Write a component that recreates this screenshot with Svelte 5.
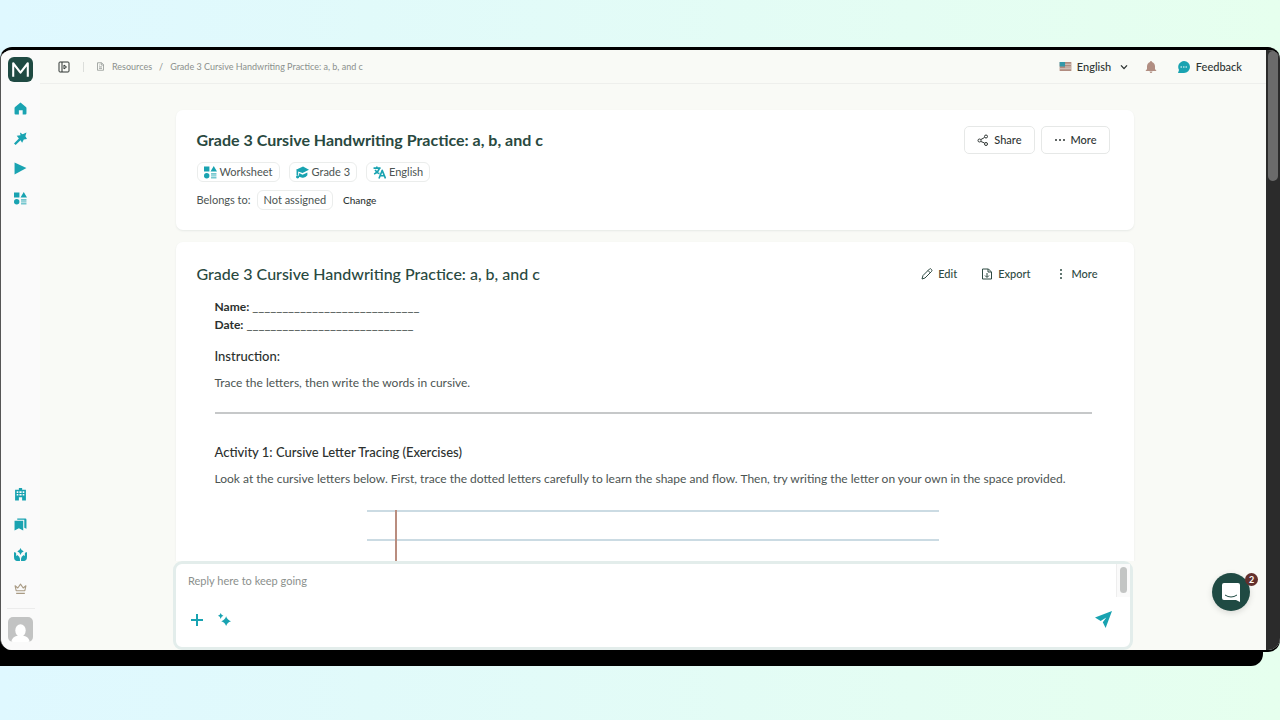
<script>
  const title = 'Grade 3 Cursive Handwriting Practice: a, b, and c';
  const blank = '_'.repeat(28);

  const topLinks = [
    { label: 'Home', icon: 'home' },
    { label: 'Tools', icon: 'wand' },
    { label: 'Start', icon: 'play' },
    { label: 'Resources', icon: 'shapes' }
  ];
  const bottomLinks = [
    { label: 'School', icon: 'school' },
    { label: 'Library', icon: 'bookmarks' },
    { label: 'Wellbeing', icon: 'hands' }
  ];

  let language = $state('English');
  let reply = $state('');
</script>

{#snippet icon(name)}
  <svg class="icon {name}" viewBox="0 0 24 24" aria-hidden="true">
    {#if name === 'home'}
      <path d="M12 1 22 9q1 1 1 2v10q0 2-2 2h-5v-8H9v8H3q-2 0-2-2V11q0-1 1-2Z" />
    {:else if name === 'wand'}
      <path d="m11 1 5 3 7-3-2 7 3 5-6 1-3 6-3-5L3 24l-3-3 9-9-4-5 7-1Z" />
    {:else if name === 'play'}
      <path d="M1 1 23 11 1 23Z" />
    {:else if name === 'shapes'}
      <path d="M0 1h10v9H0ZM18 0l6 10H12Z" /><circle cx="5" cy="18" r="5" />
      <path class="soft" d="M13 13h10v3H13Zm0 4h10v2H13Zm0 3h10v3H13Z" />
    {:else if name === 'school'}
      <path fill-rule="evenodd" d="M2 3h7V0h6v3h7v20h-7v-6H9v6H2ZM5 6v3h3V6Zm5 0v3h4V6Zm6 0v3h3V6ZM5 11v3h3v-3Zm5 0v3h4v-3Zm6 0v3h3v-3Z" />
    {:else if name === 'bookmarks'}
      <path d="M1 5h16v18l-8-4-8 4Z" /><path d="M6 1h15q2 0 2 2v17l-4-2V3H6Z" />
    {:else if name === 'hands'}
      <path d="M12 0q1 4 6 6-5 2-6 7-1-5-6-7 5-2 6-6Z" />
      <path d="M0 8q3-1 4 2v5l2-2q5 3 5 7v4H5q-5-1-5-8ZM24 8q-3-1-4 2v5l-2-2q-5 3-5 7v4h6q5-1 5-8Z" />
    {:else if name === 'crown'}
      <path class="line" d="M4 16 2 7l5 4 5-7 5 7 5-4-2 9ZM4 21h16" />
    {:else if name === 'panel'}
      <rect class="line" x="2" y="2" width="20" height="20" rx="2" /><path class="line" d="M8 2v20M12 8l5 4-5 4Z" />
    {:else if name === 'file'}
      <path class="line" d="M4 2h11l5 5v15H4ZM14 2v6h6M8 8h2M8 13h8M8 17h8" />
    {:else if name === 'chevron'}
      <path class="line" d="m3 7 9 10 9-10" />
    {:else if name === 'bell'}
      <path d="M10 2q0-2 2-2t2 2q6 2 6 9v5l3 4H1l3-4v-5q0-7 6-9ZM9 21h6q-1 3-3 3t-3-3Z" />
    {:else if name === 'chat'}
      <path d="M12 0a12 12 0 1 1 0 24H0l2-6A12 12 0 0 1 12 0Z" /><path class="white-dots" d="M5 12h3m2 0h3m2 0h3" />
    {:else if name === 'share'}
      <circle class="line" cx="5" cy="13" r="3" /><circle class="line" cx="18" cy="5" r="3" /><circle class="line" cx="18" cy="20" r="3" />
      <path class="line" d="m8 11 7-4m-7 8 7 3" />
    {:else if name === 'dots'}
      <circle cx="4" cy="12" r="2" /><circle cx="12" cy="12" r="2" /><circle cx="20" cy="12" r="2" />
    {:else if name === 'kebab'}
      <circle cx="12" cy="4" r="2" /><circle cx="12" cy="12" r="2" /><circle cx="12" cy="20" r="2" />
    {:else if name === 'cap'}
      <path d="M0 7 13 1l11 6-12 6-8-3v7H1v-9ZM6 13l6 3 9-4v5q-4 6-11 4-3-1-5-1Z" /><circle cx="3" cy="20" r="3" />
    {:else if name === 'translate'}
      <path class="line" d="M1 4h13M7 1v3M12 4Q9 12 2 15M4 7q3 6 8 7M11 23l6-15 6 15M13 18h8" />
    {:else if name === 'pencil'}
      <path class="line" d="m2 22 2-7L17 2q2-2 4 1t0 4L8 20ZM14 5l5 5" />
    {:else if name === 'export'}
      <path class="line" d="M3 2h12l6 6v14H3ZM14 2v6h6M12 10v8m-4-3 4 4 4-4" />
    {:else if name === 'plus'}
      <path class="line" d="M12 0v24M0 12h24" />
    {:else if name === 'sparkles'}
      <path d="M15 6q2 7 9 9-7 2-9 9-2-7-9-9 7-2 9-9ZM5 0q1 4 5 5-4 1-5 6-1-5-5-6 4-1 5-5Z" />
    {:else if name === 'send'}
      <path d="M24 0 15 24l-4-8 5-7-8 5L0 9Z" />
    {/if}
  </svg>
{/snippet}

<div class="page">
  <div class="window">
    <nav class="sidebar" aria-label="Main">
      <a class="logo" href="#home" aria-label="Start page">
        <svg viewBox="0 0 24 24" aria-hidden="true">
          <path d="M5 19V6l7 9 7-9v13" />
        </svg>
      </a>
      {#each topLinks as link}
        <a class="nav-link" href="#{link.icon}" aria-label={link.label}>{@render icon(link.icon)}</a>
      {/each}
      <div class="spacer"></div>
      {#each bottomLinks as link}
        <a class="nav-link" href="#{link.icon}" aria-label={link.label}>{@render icon(link.icon)}</a>
      {/each}
      <a class="nav-link upgrade" href="#upgrade" aria-label="Upgrade">{@render icon('crown')}</a>
      <button class="avatar" aria-label="Account">
        <svg viewBox="0 0 24 24" aria-hidden="true">
          <ellipse cx="12" cy="13" rx="5" ry="6" />
          <path d="M3 24q1-5 6-6h6q5 1 6 6Z" />
        </svg>
      </button>
    </nav>

    <div class="main">
      <header class="topbar">
        <button class="plain" aria-label="Open sidebar">{@render icon('panel')}</button>
        <span class="divider"></span>
        <nav class="crumbs" aria-label="Breadcrumb">
          {@render icon('file')}
          <a href="#resources">Resources</a>
          <span>/</span>
          <a href="#worksheet">{title}</a>
        </nav>
        <div class="spacer"></div>
        <label class="language">
          <svg class="flag" viewBox="0 0 13 10" aria-hidden="true">
            <path fill="#b18c80" d="M0 0h13v10H0Z" />
            <path fill="#d9cbc4" d="M6 2h7v1H6Zm0 3h7v1H6ZM0 7h13v1H0Z" />
            <path fill="#3498a9" d="M0 0h6v5H0Z" />
          </svg>
          <select bind:value={language} aria-label="Language">
            <option>English</option>
          </select>
          {@render icon('chevron')}
        </label>
        <button class="plain" aria-label="Notifications">{@render icon('bell')}</button>
        <button class="plain feedback">{@render icon('chat')}Feedback</button>
      </header>

      <main class="content">
        <section class="card summary">
          <div class="row">
            <h1>{title}</h1>
            <div class="actions">
              <button class="outlined">{@render icon('share')}Share</button>
              <button class="outlined">{@render icon('dots')}More</button>
            </div>
          </div>
          <div class="tags">
            <span class="tag">{@render icon('shapes')}Worksheet</span>
            <span class="tag">{@render icon('cap')}Grade 3</span>
            <span class="tag">{@render icon('translate')}English</span>
          </div>
          <div class="belongs">
            <span>Belongs to:</span>
            <span class="tag">Not assigned</span>
            <button class="plain">Change</button>
          </div>
        </section>

        <section class="card document">
          <div class="row">
            <h2>{title}</h2>
            <div class="tools">
              <button class="plain">{@render icon('pencil')}Edit</button>
              <button class="plain">{@render icon('export')}Export</button>
              <button class="plain">{@render icon('kebab')}More</button>
            </div>
          </div>
          <article>
            <p class="fields">
              <b>Name:</b> <span>{blank}</span><br />
              <b>Date:</b> <span>{blank}</span>
            </p>
            <h3>Instruction:</h3>
            <p>Trace the letters, then write the words in cursive.</p>
            <hr />
            <h3>Activity 1: Cursive Letter Tracing (Exercises)</h3>
            <p>
              Look at the cursive letters below. First, trace the dotted letters carefully to learn the shape and
              flow. Then, try writing the letter on your own in the space provided.
            </p>
            <div class="paper"></div>
          </article>
        </section>
      </main>

      <form class="composer" onsubmit={(e) => e.preventDefault()}>
        <div class="entry">
          <textarea bind:value={reply} placeholder="Reply here to keep going" aria-label="Reply"></textarea>
          <div class="track"></div>
        </div>
        <div class="buttons">
          <button type="button" class="plain" aria-label="Add">{@render icon('plus')}</button>
          <button type="button" class="plain" aria-label="Suggestions">{@render icon('sparkles')}</button>
          <div class="spacer"></div>
          <button class="plain" aria-label="Send">{@render icon('send')}</button>
        </div>
      </form>

      <button class="messenger" aria-label="Open messages">
        <svg viewBox="0 0 20 20" aria-hidden="true">
          <path class="bubble" d="M3 1h14q2 0 2 2v17l-4-2H3q-2 0-2-2V3q0-2 2-2Z" />
          <path class="smile" d="M4 13q6 4 12 0" />
        </svg>
        <span class="badge">2</span>
      </button>
    </div>
    <div class="gutter"><div class="thumb"></div></div>
  </div>
</div>

<style>
  :global(body) {
    margin: 0;
  }

  .page {
    box-sizing: border-box;
    height: 100vh;
    padding: 47px 0 70px;
    overflow: hidden;
    background: linear-gradient(90deg, #dff8ff, #e6ffee);
    color: #4c5452;
    font: 12px/18px Lato, sans-serif;
  }

  .window {
    box-sizing: border-box;
    display: flex;
    height: 100%;
    overflow: hidden;
    border-top: 3px solid #000;
    border-left: 1px solid #555;
    border-radius: 12px;
    background: #f9faf6;
    box-shadow: -17px 16px 0 #000, 0 2px 0 #000;
  }

  button,
  select,
  textarea {
    padding: 0;
    border: 0;
    background: none;
    color: inherit;
    font: inherit;
  }

  button {
    display: flex;
    align-items: center;
    cursor: pointer;
  }

  a {
    color: inherit;
    text-decoration: none;
  }

  h1,
  h2,
  h3,
  p {
    margin: 0;
  }

  .spacer {
    flex: 1;
  }

  .icon {
    width: 12px;
    height: 12px;
    flex: none;
    fill: currentColor;
  }

  .line {
    fill: none;
    stroke: currentColor;
    stroke-width: 2;
    stroke-linejoin: round;
  }

  .soft {
    opacity: 0.6;
  }

  /* Sidebar */
  .sidebar {
    display: flex;
    flex: none;
    flex-direction: column;
    align-items: center;
    width: 39px;
    background: #fafafa;
    color: #19a3b1;
  }

  .sidebar .icon {
    width: 13px;
    height: 13px;
  }

  .logo {
    width: 25px;
    height: 25px;
    margin: 7px 0 11px;
    border-radius: 6px;
    background: #1f4a43;
  }

  .logo svg {
    display: block;
    fill: none;
    stroke: #fff;
    stroke-width: 2;
    stroke-linejoin: round;
  }

  .nav-link {
    display: flex;
    align-items: center;
    height: 30px;
  }

  .upgrade {
    justify-content: center;
    width: 28px;
    height: 39px;
    border-bottom: 1px solid #ececec;
    color: #a99b84;
  }

  .avatar {
    width: 25px;
    height: 25px;
    margin: 8px 0;
    overflow: hidden;
    border-radius: 5px;
    background: #c2c3c3;
  }

  .avatar svg {
    width: 25px;
    fill: #fff;
  }

  /* Top bar */
  .main {
    position: relative;
    display: flex;
    flex: 1;
    flex-direction: column;
    min-width: 0;
  }

  .topbar {
    display: flex;
    flex: none;
    align-items: center;
    height: 33px;
    padding: 0 24px 0 18px;
    border-bottom: 1px solid #eeefec;
    color: #2e3533;
    font-size: 11px;
    font-weight: 500;
  }

  .divider {
    width: 1px;
    height: 10px;
    margin: 0 12px 0 13px;
    background: #dcdedb;
  }

  .crumbs {
    display: flex;
    align-items: center;
    gap: 7px;
    color: #8b908d;
    font-size: 9px;
    font-weight: 400;
  }

  .crumbs .icon {
    width: 9px;
    height: 9px;
  }

  .language {
    display: flex;
    align-items: center;
    margin-right: 17px;
  }

  .flag {
    width: 13px;
    height: 9px;
    margin-right: 5px;
  }

  select {
    width: 43px;
    appearance: none;
  }

  .chevron {
    width: 8px;
    height: 8px;
  }

  .language .line {
    stroke-width: 4;
  }

  .bell {
    color: #b18e82;
  }

  .feedback {
    gap: 6px;
    margin-left: 21px;
  }

  .chat {
    color: #19a3b1;
  }

  .white-dots {
    stroke: #fff;
    stroke-width: 2;
  }

  /* Cards */
  .content {
    flex: 1;
    min-height: 0;
    overflow: hidden;
    padding: 26px 18px 0 21px;
  }

  .card {
    box-sizing: border-box;
    max-width: 958px;
    margin: 0 auto 12px;
    padding: 16px 24px 20px 21px;
    border-radius: 7px;
    background: #fff;
    box-shadow: 0 1px 2px #e6e9e6;
  }

  .row,
  .actions,
  .tools,
  .tags,
  .belongs,
  .tag {
    display: flex;
    align-items: center;
  }

  .row {
    justify-content: space-between;
  }

  h1,
  h2 {
    color: #29493f;
    font-size: 16px;
    line-height: 20px;
    font-weight: 700;
  }

  h2 {
    font-weight: 500;
  }

  .actions {
    gap: 6px;
  }

  .outlined {
    gap: 5px;
    height: 28px;
    padding: 0 12px;
    border: 1px solid #e6e8e7;
    border-radius: 5px;
    color: #2e3533;
    font-size: 11px;
    font-weight: 500;
  }

  .tags {
    gap: 9px;
    margin: 8px 0;
  }

  .tag {
    gap: 3px;
    height: 18px;
    padding: 0 6px;
    border: 1px solid #ebedec;
    border-radius: 6px;
    font-size: 11px;
  }

  .tag .icon {
    width: 13px;
    height: 13px;
    color: #19a3b1;
  }

  .tag .line {
    stroke-width: 3;
  }

  .belongs {
    gap: 6px;
    font-size: 11px;
  }

  .belongs .plain {
    margin-left: 4px;
    color: #2e3533;
    font-size: 10px;
    font-weight: 500;
  }

  .document {
    padding: 22px 36px 0 21px;
  }

  .tools {
    gap: 24px;
    color: #2e4a43;
    font-size: 11px;
    font-weight: 500;
  }

  .tools .plain {
    gap: 5px;
  }

  /* Worksheet text */
  article {
    padding: 14px 6px 0 18px;
  }

  .fields b {
    color: #2b302e;
    font-weight: 700;
  }

  .fields span {
    font-size: 13px;
    line-height: 16px;
  }

  h3 {
    margin: 13px 0 9px;
    color: #2b302e;
    font-size: 13px;
    line-height: 18px;
    font-weight: 500;
  }

  hr {
    height: 2px;
    margin: 20px 0 29px;
    border: 0;
    background: #c6c8c9;
  }

  .paper {
    width: 572px;
    max-width: 100%;
    height: 320px;
    margin: 22px auto 0;
    background:
      linear-gradient(#b98d7f, #b98d7f) 28px 0 / 2px 100% no-repeat,
      repeating-linear-gradient(#cbdbe3 0 2px, transparent 2px 29px);
  }

  /* Reply box */
  .composer {
    box-sizing: border-box;
    z-index: 1;
    display: flex;
    flex: none;
    flex-direction: column;
    width: calc(100% - 36px);
    max-width: 960px;
    height: 89px;
    margin: 0 auto;
    border: 3px solid #e3edeb;
    border-radius: 9px;
    background: #fff;
  }

  .entry {
    display: flex;
    height: 33px;
  }

  textarea {
    flex: 1;
    box-sizing: border-box;
    padding: 8px 12px 0;
    outline: 0;
    overflow: hidden;
    resize: none;
    font-size: 11px;
    line-height: 18px;
  }

  textarea::placeholder {
    color: #8b908d;
  }

  .track {
    width: 7px;
    padding: 3px;
    border-left: 1px solid #eee;
    background: #fafafa;
  }

  .track::before {
    display: block;
    width: 7px;
    height: 26px;
    border-radius: 4px;
    background: #c3c5c4;
    content: '';
  }

  .buttons {
    display: flex;
    align-items: center;
    gap: 15px;
    padding: 14px 18px 0 15px;
    color: #19a3b1;
  }

  .plus .line {
    stroke-width: 4;
  }

  .sparkles {
    width: 13px;
    height: 13px;
  }

  .send {
    width: 17px;
    height: 17px;
  }

  /* Floating button over the page */
  .messenger {
    position: absolute;
    right: 16px;
    bottom: 39px;
    z-index: 2;
    justify-content: center;
    width: 38px;
    height: 38px;
    border-radius: 50%;
    background: #1f4a43;
    box-shadow: 0 2px 6px #0002;
  }

  .messenger svg {
    width: 20px;
    height: 20px;
  }

  .bubble {
    fill: #fff;
  }

  .smile {
    fill: none;
    stroke: #1f4a43;
  }

  .badge {
    position: absolute;
    top: 0;
    right: -8px;
    width: 13px;
    height: 13px;
    border-radius: 50%;
    background: #63302d;
    color: #fff;
    font-size: 9px;
    line-height: 13px;
    font-weight: 700;
  }

  .gutter {
    flex: none;
    width: 10px;
    padding: 1px 2px;
    background: #2b2b2b;
  }

  .thumb {
    height: 130px;
    border-radius: 5px;
    background: #6b6b6b;
  }
</style>
